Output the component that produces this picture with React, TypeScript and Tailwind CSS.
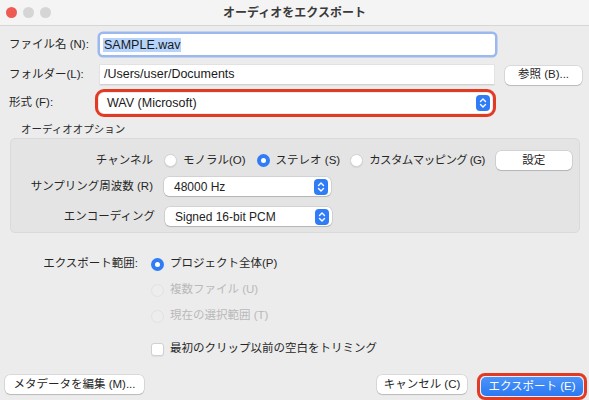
import React from "react";

const font = { fontFamily: '"Liberation Sans", "Noto Sans CJK JP", sans-serif' };

function Chevrons({ className = "" }: { className?: string }) {
	return (
		<span className={`flex h-[16px] w-[14px] items-center justify-center rounded-[4px] bg-[#2f7cf6] ${className}`}>
			<svg width="8" height="12" viewBox="0 0 8 12" fill="none" stroke="white" strokeWidth="1.4" strokeLinecap="round" strokeLinejoin="round">
				<path d="M1.5 4.5 L4 2 L6.5 4.5" />
				<path d="M1.5 7.5 L4 10 L6.5 7.5" />
			</svg>
		</span>
	);
}

function Radio({ checked = false, disabled = false }: { checked?: boolean; disabled?: boolean }) {
	if (checked) {
		return (
			<span className="flex h-[13px] w-[13px] shrink-0 items-center justify-center rounded-full bg-[#2f7cf6]">
				<span className="h-[5px] w-[5px] rounded-full bg-white" />
			</span>
		);
	}
	return (
		<span
			className={`h-[13px] w-[13px] shrink-0 rounded-full border ${
				disabled ? "border-[#e2e2e2] bg-[#ededed]" : "border-[#d2d2d2] bg-white shadow-[0_1px_1px_rgba(0,0,0,0.08)]"
			}`}
		/>
	);
}

function MacButton({ children, className = "" }: { children: React.ReactNode; className?: string }) {
	return (
		<button
			type="button"
			className={`flex h-[19px] shrink-0 items-center justify-center whitespace-nowrap rounded-[5px] bg-white text-[11.5px] text-[#262626] shadow-[0_0_0_0.5px_rgba(0,0,0,0.16),0_1px_1px_rgba(0,0,0,0.14)] ${className}`}
		>
			{children}
		</button>
	);
}

function Select({ value, className = "" }: { value: string; className?: string }) {
	return (
		<div
			className={`flex h-[19px] items-center justify-between rounded-[5px] bg-white pl-[10px] pr-[3px] text-[12px] text-[#222] shadow-[0_0_0_0.5px_rgba(0,0,0,0.16),0_1px_1px_rgba(0,0,0,0.14)] ${className}`}
		>
			<span>{value}</span>
			<Chevrons />
		</div>
	);
}

export default function App() {
	return (
		<div style={font} className="flex h-[400px] w-[589px] flex-col overflow-hidden whitespace-nowrap bg-[#ececec] text-[#262626]">
			{/* title bar */}
			<div className="relative flex h-[26px] shrink-0 items-center border-b border-[#d6d6d6] bg-[#f4f4f4]">
				<div className="absolute left-[6px] top-[7px] flex gap-[6px]">
					<span className="h-[11px] w-[11px] rounded-full bg-[#ee5b53]" />
					<span className="h-[11px] w-[11px] rounded-full bg-[#d5d5d5]" />
					<span className="h-[11px] w-[11px] rounded-full bg-[#d5d5d5]" />
				</div>
				<div className="flex-1 text-center text-[12px] font-bold text-[#3a3a3a]">オーディオをエクスポート</div>
			</div>

			<div className="flex flex-col pl-[9px] pr-[7px]">
				{/* file name */}
				<div className="mt-[8px] flex h-[21px] items-center">
					<div className="w-[91px] text-[11.5px]">ファイル名 (N):</div>
					<div className="flex h-[21px] w-[395px] items-center rounded-[3px] bg-white px-[3px] shadow-[0_0_0_2.5px_#9bb9ee]">
						<span className="bg-[#b5d3fb] px-[1px] text-[12.5px] leading-[14px] text-[#1a1a1a]">SAMPLE.wav</span>
					</div>
				</div>

				{/* folder */}
				<div className="mt-[10px] flex h-[20px] items-center">
					<div className="w-[91px] text-[11.5px]">フォルダー(L):</div>
					<div className="flex h-[20px] w-[394px] items-center border-b border-[#d2d2d2] bg-white px-[4px] text-[12.5px] text-[#1a1a1a] shadow-[0_0_0_0.5px_rgba(0,0,0,0.08)]">
						/Users/user/Documents
					</div>
					<MacButton className="ml-[11px] w-[77px]">参照 (B)...</MacButton>
				</div>

				{/* format */}
				<div className="mt-[4px] flex h-[28px] items-center">
					<div className="w-[86px] text-[11.5px]">形式 (F):</div>
					<div className="flex h-[28px] w-[401px] items-center rounded-[9px] border-[3px] border-[#e33a24] p-[1px]">
						<div className="flex h-full w-full items-center justify-between rounded-[5px] bg-white pl-[8px] pr-[2px] text-[12.5px] text-[#1a1a1a]">
							<span>WAV (Microsoft)</span>
							<Chevrons />
						</div>
					</div>
				</div>

				{/* audio options */}
				<div className="ml-[12px] mt-[5px] text-[10.5px] leading-[14px] text-[#2a2a2a]">オーディオオプション</div>
				<div className="ml-[1px] mt-[2px] flex h-[95px] w-[570px] flex-col rounded-[5px] border border-[#dadada] bg-[#e4e4e4] pt-[12px]">
					<div className="flex h-[19px] items-center">
						<div className="w-[142px] text-right text-[11.5px]">チャンネル</div>
						<div className="ml-[11px] flex items-center gap-[6px]">
							<Radio />
							<span className="text-[11.5px]">モノラル(O)</span>
						</div>
						<div className="ml-[11px] flex items-center gap-[6px]">
							<Radio checked />
							<span className="text-[11.5px]">ステレオ (S)</span>
						</div>
						<div className="ml-[10px] flex items-center gap-[6px]">
							<Radio />
							<span className="text-[11.5px] tracking-[-0.6px]">カスタムマッピング (G)</span>
						</div>
						<MacButton className="ml-[11px] w-[76px]">設定</MacButton>
					</div>
					<div className="mt-[7px] flex h-[19px] items-center">
						<div className="w-[142px] text-right text-[11.5px]">サンプリング周波数 (R)</div>
						<Select value="48000 Hz" className="ml-[11px] w-[167px]" />
					</div>
					<div className="mt-[11px] flex h-[19px] items-center">
						<div className="w-[144px] text-right text-[11.5px]">エンコーディング</div>
						<Select value="Signed 16-bit PCM" className="ml-[10px] w-[167px]" />
					</div>
				</div>

				{/* export range */}
				<div className="mt-[23px] flex flex-col">
					<div className="flex h-[16px] items-center">
						<div className="w-[129px] text-right text-[11.5px]">エクスポート範囲:</div>
						<div className="ml-[13px] flex items-center gap-[6px]">
							<Radio checked />
							<span className="text-[11.5px]">プロジェクト全体(P)</span>
						</div>
					</div>
					<div className="ml-[142px] mt-[10px] flex h-[16px] items-center gap-[6px] text-[#b9b9b9]">
						<Radio disabled />
						<span className="text-[11.5px]">複数ファイル (U)</span>
					</div>
					<div className="ml-[142px] mt-[10px] flex h-[16px] items-center gap-[6px] text-[#b9b9b9]">
						<Radio disabled />
						<span className="text-[11.5px]">現在の選択範囲 (T)</span>
					</div>
					<div className="ml-[142px] mt-[17px] flex h-[16px] items-center gap-[6px]">
						<span className="h-[13px] w-[13px] rounded-[3px] border border-[#d0d0d0] bg-white shadow-[0_1px_1px_rgba(0,0,0,0.06)]" />
						<span className="text-[11.5px]">最初のクリップ以前の空白をトリミング</span>
					</div>
				</div>
			</div>

			{/* bottom buttons */}
			<div className="mt-auto flex h-[27px] items-start pl-[5px] pr-[2px]">
				<MacButton className="mt-[2px] w-[139px]">メタデータを編集 (M)...</MacButton>
				<MacButton className="ml-auto mt-[2px] w-[90px]">キャンセル (C)</MacButton>
				<div className="ml-[10px] rounded-[8px] border-[3px] border-[#e33a24] p-[1px]">
					<button
						type="button"
						className="flex h-[19px] w-[102px] items-center justify-center rounded-[5px] bg-gradient-to-b from-[#4c94f8] to-[#2a78f3] text-[11.5px] text-white"
					>
						エクスポート (E)
					</button>
				</div>
			</div>
		</div>
	);
}
